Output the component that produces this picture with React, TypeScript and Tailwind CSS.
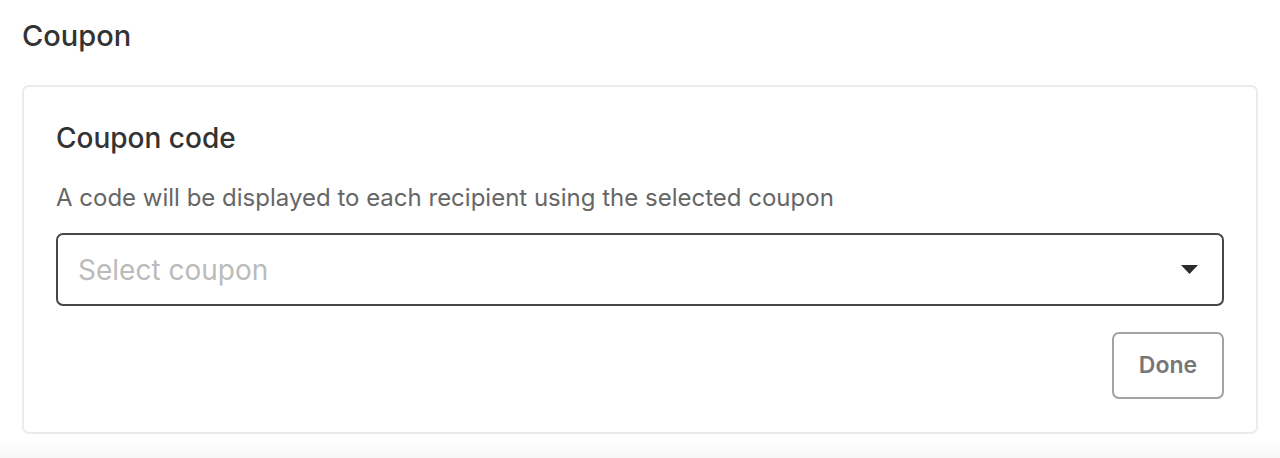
export default function App() {
  return (
    <div className="relative h-[458px] w-full bg-white font-['Inter','Liberation_Sans',sans-serif]">
      <div className="relative z-10 px-[22px] pt-[18px]">
        <h2 className="text-[29px] font-medium leading-[36px] text-[#333]">Coupon</h2>
        <section className="mt-[31px] rounded-[7px] border-2 border-[#ebebeb] bg-white px-[32px] pt-[34px] pb-[33px]">
          <h3 className="text-[28px] font-medium leading-[34px] text-[#333]">Coupon code</h3>
          <p className="mt-[27px] text-[24px] leading-[32px] text-[#666]">
            A code will be displayed to each recipient using the selected coupon
          </p>
          <button className="mt-[19px] flex h-[73px] w-full items-center justify-between rounded-[7px] border-2 border-[#474747] px-[20px] text-left">
            <span className="text-[28px] text-[#bbb]">Select coupon</span>
            <svg width="17" height="10" viewBox="0 0 17 10" className="mr-[4px]">
              <path d="M0 0 H17 L8.5 9 Z" fill="#2b2b2b" />
            </svg>
          </button>
          <div className="mt-[26px] flex justify-end">
            <button className="h-[67px] w-[112px] rounded-[7px] border-2 border-[#a3a3a3] text-[23px] font-semibold text-[#777]">
              Done
            </button>
          </div>
        </section>
      </div>
      <div className="absolute bottom-0 left-0 h-[20px] w-full bg-gradient-to-b from-white to-[#f7f7f7]" />
    </div>
  );
}
